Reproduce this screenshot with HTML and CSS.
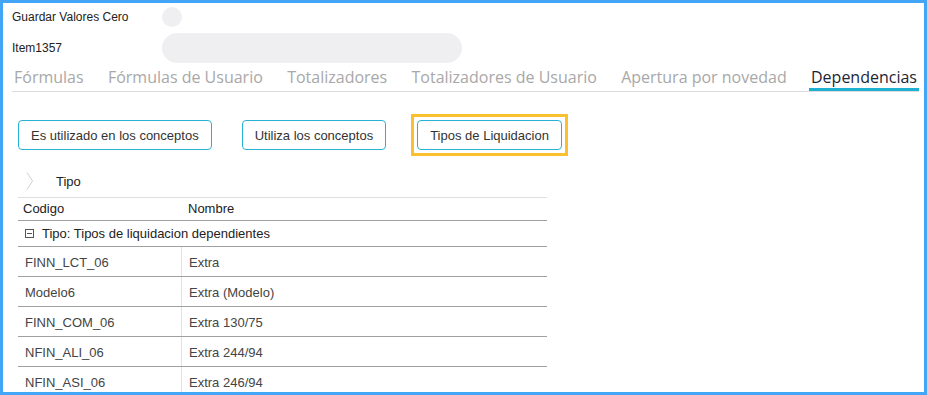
FILE: index.html
```html
<!DOCTYPE html>
<html lang="es">

<head>
    <title>Dependencias</title>
    <meta charset="UTF-8">
    <meta name="viewport" content="width=device-width, initial-scale=1">
    <link rel="stylesheet" href="styles.css">
</head>

<body>
    <div class="frame">
        <div class="fieldRow">
            <span class="fieldLabel">Guardar Valores Cero</span>
            <span class="toggle"></span>
        </div>
        <div class="fieldRow tall">
            <span class="fieldLabel">Item1357</span>
            <span class="textBox"></span>
        </div>

        <nav class="tabs">
            <span class="tab">Fórmulas</span>
            <span class="tab">Fórmulas de Usuario</span>
            <span class="tab">Totalizadores</span>
            <span class="tab">Totalizadores de Usuario</span>
            <span class="tab">Apertura por novedad</span>
            <span class="tab active">Dependencias</span>
        </nav>

        <div class="toolbar">
            <button class="depButton">Es utilizado en los conceptos</button>
            <button class="depButton">Utiliza los conceptos</button>
            <span class="focusRing">
                <button class="depButton">Tipos de Liquidacion</button>
            </span>
        </div>

        <div class="grid">
            <div class="groupPanel">
                <svg class="chevron" width="8" height="18" viewBox="0 0 8 18">
                    <polyline points="1,0.5 6.5,9 1,17.5" fill="none" stroke="#cfcfcf" stroke-width="1" />
                </svg>
                <span>Tipo</span>
            </div>
            <div class="headRow">
                <span>Codigo</span>
                <span>Nombre</span>
            </div>
            <div class="groupRow">
                <span class="collapse"></span>
                Tipo: Tipos de liquidacion dependientes
            </div>
            <div class="dataRow"><span>FINN_LCT_06</span><span>Extra</span></div>
            <div class="dataRow"><span>Modelo6</span><span>Extra (Modelo)</span></div>
            <div class="dataRow"><span>FINN_COM_06</span><span>Extra 130/75</span></div>
            <div class="dataRow"><span>NFIN_ALI_06</span><span>Extra 244/94</span></div>
            <div class="dataRow"><span>NFIN_ASI_06</span><span>Extra 246/94</span></div>
        </div>
    </div>
</body>

</html>
```

FILE: styles.css
```css
body {
    margin: 0;
    font-family: "Liberation Sans", Arial, sans-serif;
    color: #222;
}

.frame {
    height: 395px;
    box-sizing: border-box;
    border: 3px solid #42a5f5;
    padding: 4px 5px 0 9px;
    overflow: hidden;
}

.fieldRow {
    display: flex;
    align-items: center;
    height: 20px;
    font-size: 12px;
}

.fieldRow.tall {
    height: 30px;
    margin-top: 6px;
}

.fieldLabel {
    width: 150px;
}

.toggle {
    width: 20px;
    height: 20px;
    border-radius: 50%;
    background-color: #efeff1;
}

.textBox {
    width: 300px;
    height: 30px;
    border-radius: 15px;
    background-color: #efeff1;
}

.tabs {
    display: flex;
    justify-content: space-between;
    border-bottom: 1px solid #dcdcdc;
    font-family: "Open Sans", sans-serif;
    font-size: 16px;
}

.tab {
    padding: 4px 2px 1px;
    line-height: 20px;
    color: #a8a8a8;
    border-bottom: 3px solid transparent;
}

.tab.active {
    color: #1c2537;
    border-bottom-color: #1eb0d2;
}

.toolbar {
    display: flex;
    align-items: center;
    gap: 30px;
    margin-top: 28px;
    padding-left: 6px;
    height: 30px;
}

.depButton {
    height: 30px;
    padding: 0 12px;
    border: 1px solid #29b1d3;
    border-radius: 4px;
    background-color: #fff;
    font-family: "Liberation Sans", Arial, sans-serif;
    font-size: 13px;
    color: #333;
}

.focusRing {
    display: flex;
    margin-left: -5px;
    padding: 3px;
    border: 3px solid #fbc02d;
}

.grid {
    width: 529px;
    margin-left: 6px;
    font-size: 13px;
}

.groupPanel {
    display: flex;
    align-items: center;
    gap: 22px;
    height: 18px;
    padding: 22px 0 7px 8px;
    color: #222;
}

.headRow {
    display: grid;
    grid-template-columns: 165px 1fr;
    height: 20px;
    padding: 0 0 2px 5px;
    align-items: center;
    border-top: 1px solid #dedede;
    border-bottom: 1px solid #a0a0a0;
}

.groupRow {
    display: flex;
    align-items: center;
    gap: 8px;
    height: 25px;
    padding-left: 7px;
    border-bottom: 1px solid #a0a0a0;
}

.collapse {
    position: relative;
    width: 7px;
    height: 7px;
    border: 1px solid #555;
}

.collapse::after {
    content: "";
    position: absolute;
    left: 1px;
    right: 1px;
    top: 3px;
    height: 1px;
    background-color: #555;
}

.dataRow {
    display: grid;
    grid-template-columns: 164px 1fr;
    height: 29px;
    border-bottom: 1px solid #a0a0a0;
    color: #444;
}

.dataRow span {
    display: flex;
    align-items: center;
    padding: 1px 0 0 7px;
}

.dataRow span:first-child {
    border-right: 1px solid #e2e2e2;
}
```
